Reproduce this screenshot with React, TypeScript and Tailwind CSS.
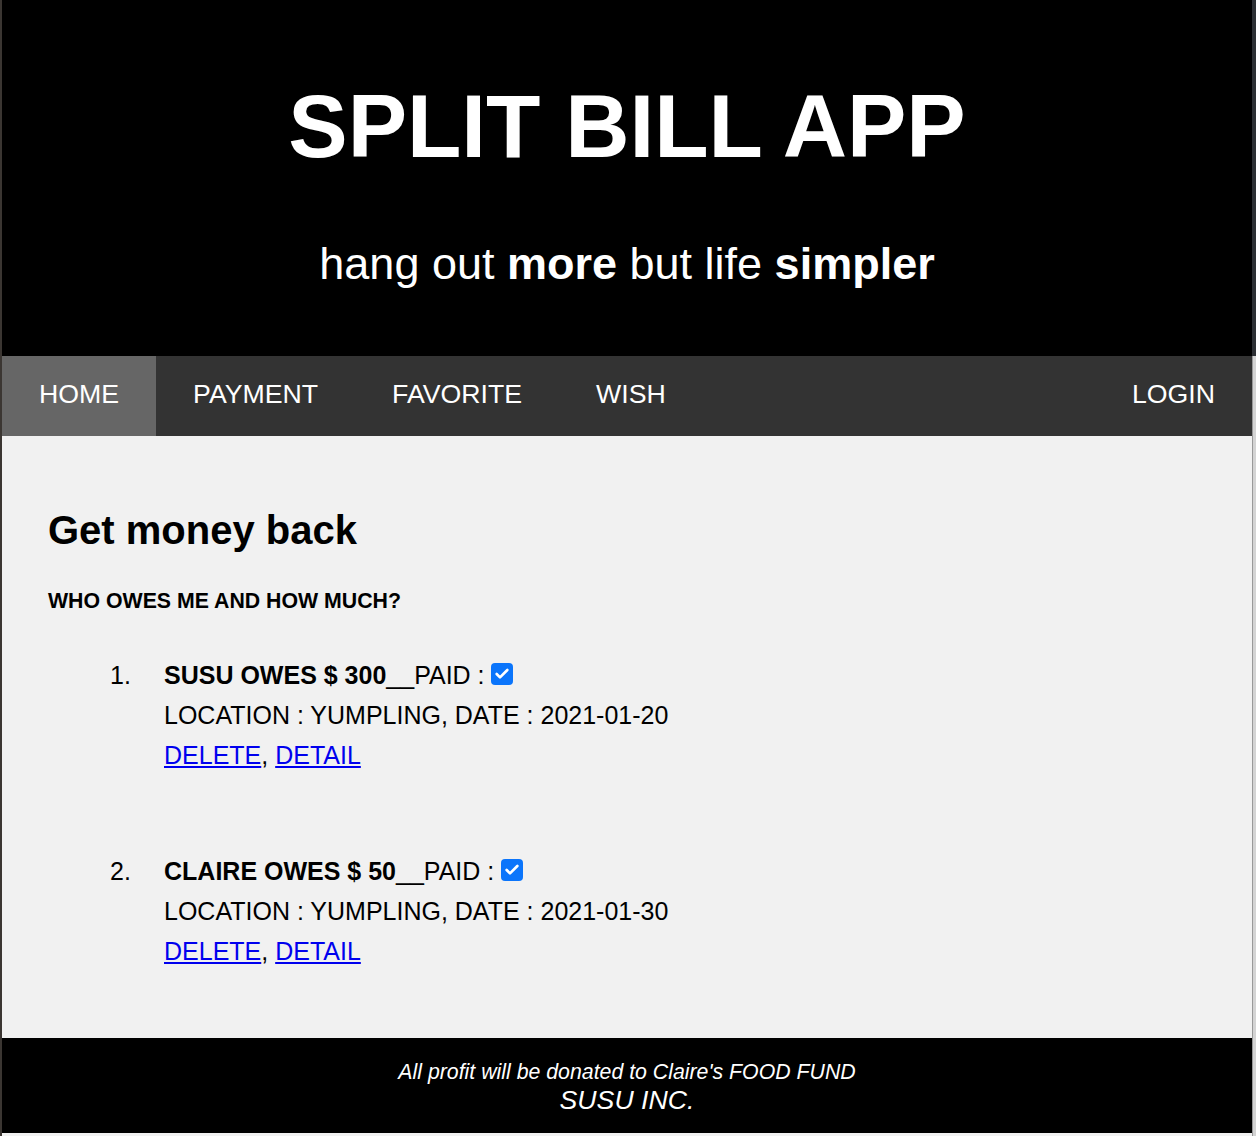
import { Check } from 'lucide-react';

interface Debt {
  id: number;
  name: string;
  amount: number;
  paid: boolean;
  location: string;
  date: string;
}

const debts: Debt[] = [
  { id: 1, name: 'SUSU', amount: 300, paid: true, location: 'YUMPLING', date: '2021-01-20' },
  { id: 2, name: 'CLAIRE', amount: 50, paid: true, location: 'YUMPLING', date: '2021-01-30' },
];

const navItems = ['HOME', 'PAYMENT', 'FAVORITE', 'WISH'];

function Checkbox({ checked }: { checked: boolean }) {
  return (
    <span
      className={`inline-flex w-[22px] h-[22px] rounded-[4px] items-center justify-center align-middle relative -top-[3px] ${
        checked ? 'bg-[#0b75fb]' : 'bg-white border border-gray-500'
      }`}
    >
      {checked && <Check className="w-[16px] h-[16px] text-white" strokeWidth={4} />}
    </span>
  );
}

function DebtItem({ debt, index }: { debt: Debt; index: number }) {
  return (
    <li className="flex text-[25px] leading-[40px] text-black">
      <span className="w-[54px] shrink-0">{index}.</span>
      <div>
        <div>
          <span className="font-bold">
            {debt.name} OWES $ {debt.amount}
          </span>
          __PAID : <Checkbox checked={debt.paid} />
        </div>
        <div>
          LOCATION : {debt.location}, DATE : {debt.date}
        </div>
        <div>
          <a href="#" className="text-[#0000ee] underline">DELETE</a>,{' '}
          <a href="#" className="text-[#0000ee] underline">DETAIL</a>
        </div>
      </div>
    </li>
  );
}

export default function App() {
  return (
    <div className="min-h-[1136px] bg-[#f1f1f1] flex font-['Liberation_Sans',Arial,sans-serif]">
      {/* window edge */}
      <div className="w-[2px] shrink-0 bg-[#3b3632]" />

      <div className="flex-1 min-w-0">
        {/* Header */}
        <header className="bg-black text-white text-center h-[356px] pt-[76px]">
          <h1 className="text-[89px] leading-[100px] font-bold">SPLIT BILL APP</h1>
          <p className="text-[45px] leading-[52px] mt-[62px]">
            hang out <b>more</b> but life <b>simpler</b>
          </p>
        </header>

        {/* Navigation */}
        <nav className="bg-[#333] h-[80px] flex text-white text-[26.7px]">
          {navItems.map((item, i) => (
            <a
              key={item}
              href="#"
              className={`flex items-center px-[37px] pb-[3px] ${i === 0 ? 'bg-[#666]' : ''}`}
            >
              {item}
            </a>
          ))}
          <a href="#" className="ml-auto flex items-center px-[37px] pb-[3px]">LOGIN</a>
        </nav>

        {/* Main */}
        <main className="bg-[#f1f1f1] pt-[71px] pb-[67px] px-[46px]">
          <h2 className="text-[40px] leading-[46px] font-bold text-black">Get money back</h2>
          <h5 className="text-[21.3px] leading-[24px] font-bold mt-[36px] text-black">
            WHO OWES ME AND HOW MUCH?
          </h5>
          <ol className="mt-[42px] ml-[62px] flex flex-col gap-[76px]">
            {debts.map((d, i) => (
              <DebtItem key={d.id} debt={d} index={i + 1} />
            ))}
          </ol>
        </main>

        {/* Footer */}
        <footer className="bg-black text-white text-center italic pt-[22px] pb-[18px]">
          <p className="text-[21.3px] leading-[24.5px]">All profit will be donated to Claire's FOOD FUND</p>
          <p className="text-[26.7px] leading-[30.7px]">SUSU INC.</p>
        </footer>
      </div>

      {/* scrollbar edge */}
      <div className="w-[4px] shrink-0 flex flex-col">
        <div className="h-[356px] bg-[#2c2f33]" />
        <div className="flex-1 bg-[#d4d4d4] border-l border-[#999]" />
      </div>
    </div>
  );
}
